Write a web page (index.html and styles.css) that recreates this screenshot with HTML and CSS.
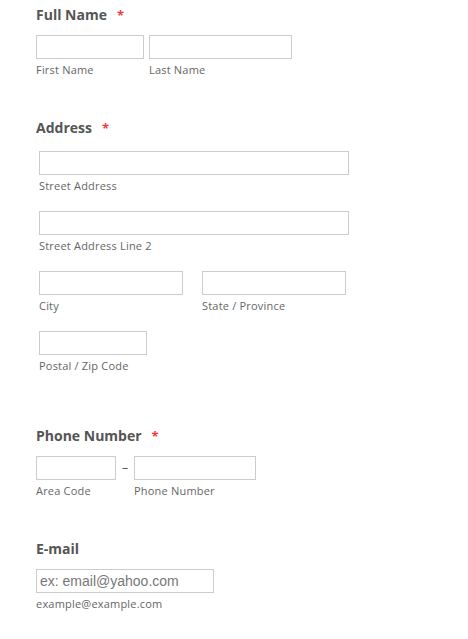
FILE: index.html
```html
<!DOCTYPE html>
<html>
<head>
<meta charset="utf-8">
<link rel="stylesheet" href="styles.css">
</head>
<body>
<form class="form">
  <div class="field">
    <div class="title">Full Name<span class="req">*</span></div>
    <div class="row gap5">
      <div class="sub"><input class="inp w108" type="text"><span class="label">First Name</span></div>
      <div class="sub"><input class="inp w143" type="text"><span class="label">Last Name</span></div>
    </div>
  </div>

  <div class="field">
    <div class="title">Address<span class="req">*</span></div>
    <div class="address">
      <div class="sub"><input class="inp w310" type="text"><span class="label">Street Address</span></div>
      <div class="sub"><input class="inp w310" type="text"><span class="label">Street Address Line 2</span></div>
      <div class="row gap19">
        <div class="sub"><input class="inp w144" type="text"><span class="label">City</span></div>
        <div class="sub"><input class="inp w144" type="text"><span class="label">State / Province</span></div>
      </div>
      <div class="sub"><input class="inp w108" type="text"><span class="label">Postal / Zip Code</span></div>
    </div>
  </div>

  <div class="field">
    <div class="title">Phone Number<span class="req">*</span></div>
    <div class="row">
      <div class="sub"><input class="inp w80" type="text"><span class="label">Area Code</span></div>
      <span class="dash">–</span>
      <div class="sub"><input class="inp w122" type="text"><span class="label">Phone Number</span></div>
    </div>
  </div>

  <div class="field">
    <div class="title">E-mail</div>
    <div class="sub"><input class="inp w178" type="text" placeholder="ex: email@yahoo.com"><span class="label">example@example.com</span></div>
  </div>
</form>
</body>
</html>
```

FILE: styles.css
```css
html, body {
  margin: 0;
  padding: 0;
  background: #fff;
}
body {
  font-family: "Open Sans", "DejaVu Sans", sans-serif;
  color: #555;
}
.form {
  padding: 5px 0 0 36px;
}
.field {
  margin-bottom: 41px;
}
.title {
  font-size: 14px;
  font-weight: bold;
  line-height: 20px;
  color: #555;
  margin-bottom: 10px;
}
.req {
  color: #f23a3c;
  margin-left: 10px;
  font-size: 13px;
}
.row {
  display: flex;
  align-items: flex-start;
}
.gap5 { gap: 5px; }
.gap19 { gap: 19px; }
.sub {
  display: flex;
  flex-direction: column;
  align-items: flex-start;
}
.address {
  padding: 3px 3px 12px 3px;
  display: flex;
  flex-direction: column;
  gap: 18px;
}
.inp {
  box-sizing: border-box;
  height: 24px;
  border: 1px solid #ccc;
  border-radius: 0;
  margin: 0;
  padding: 0 3px;
  font-family: "Liberation Sans", Arial, sans-serif;
  font-size: 14px;
  color: #555;
  background: #fff;
  outline: none;
}
.inp::placeholder {
  color: #777;
}
.w80 { width: 80px; }
.w108 { width: 108px; }
.w122 { width: 122px; }
.w143 { width: 143px; }
.w144 { width: 144px; }
.w178 { width: 178px; }
.w310 { width: 310px; }
.label {
  font-size: 11px;
  line-height: 15px;
  margin-top: 3px;
  color: #666;
  letter-spacing: 0.2px;
}
.dash {
  width: 18px;
  text-align: center;
  font-size: 12px;
  line-height: 24px;
  color: #555;
}
```
